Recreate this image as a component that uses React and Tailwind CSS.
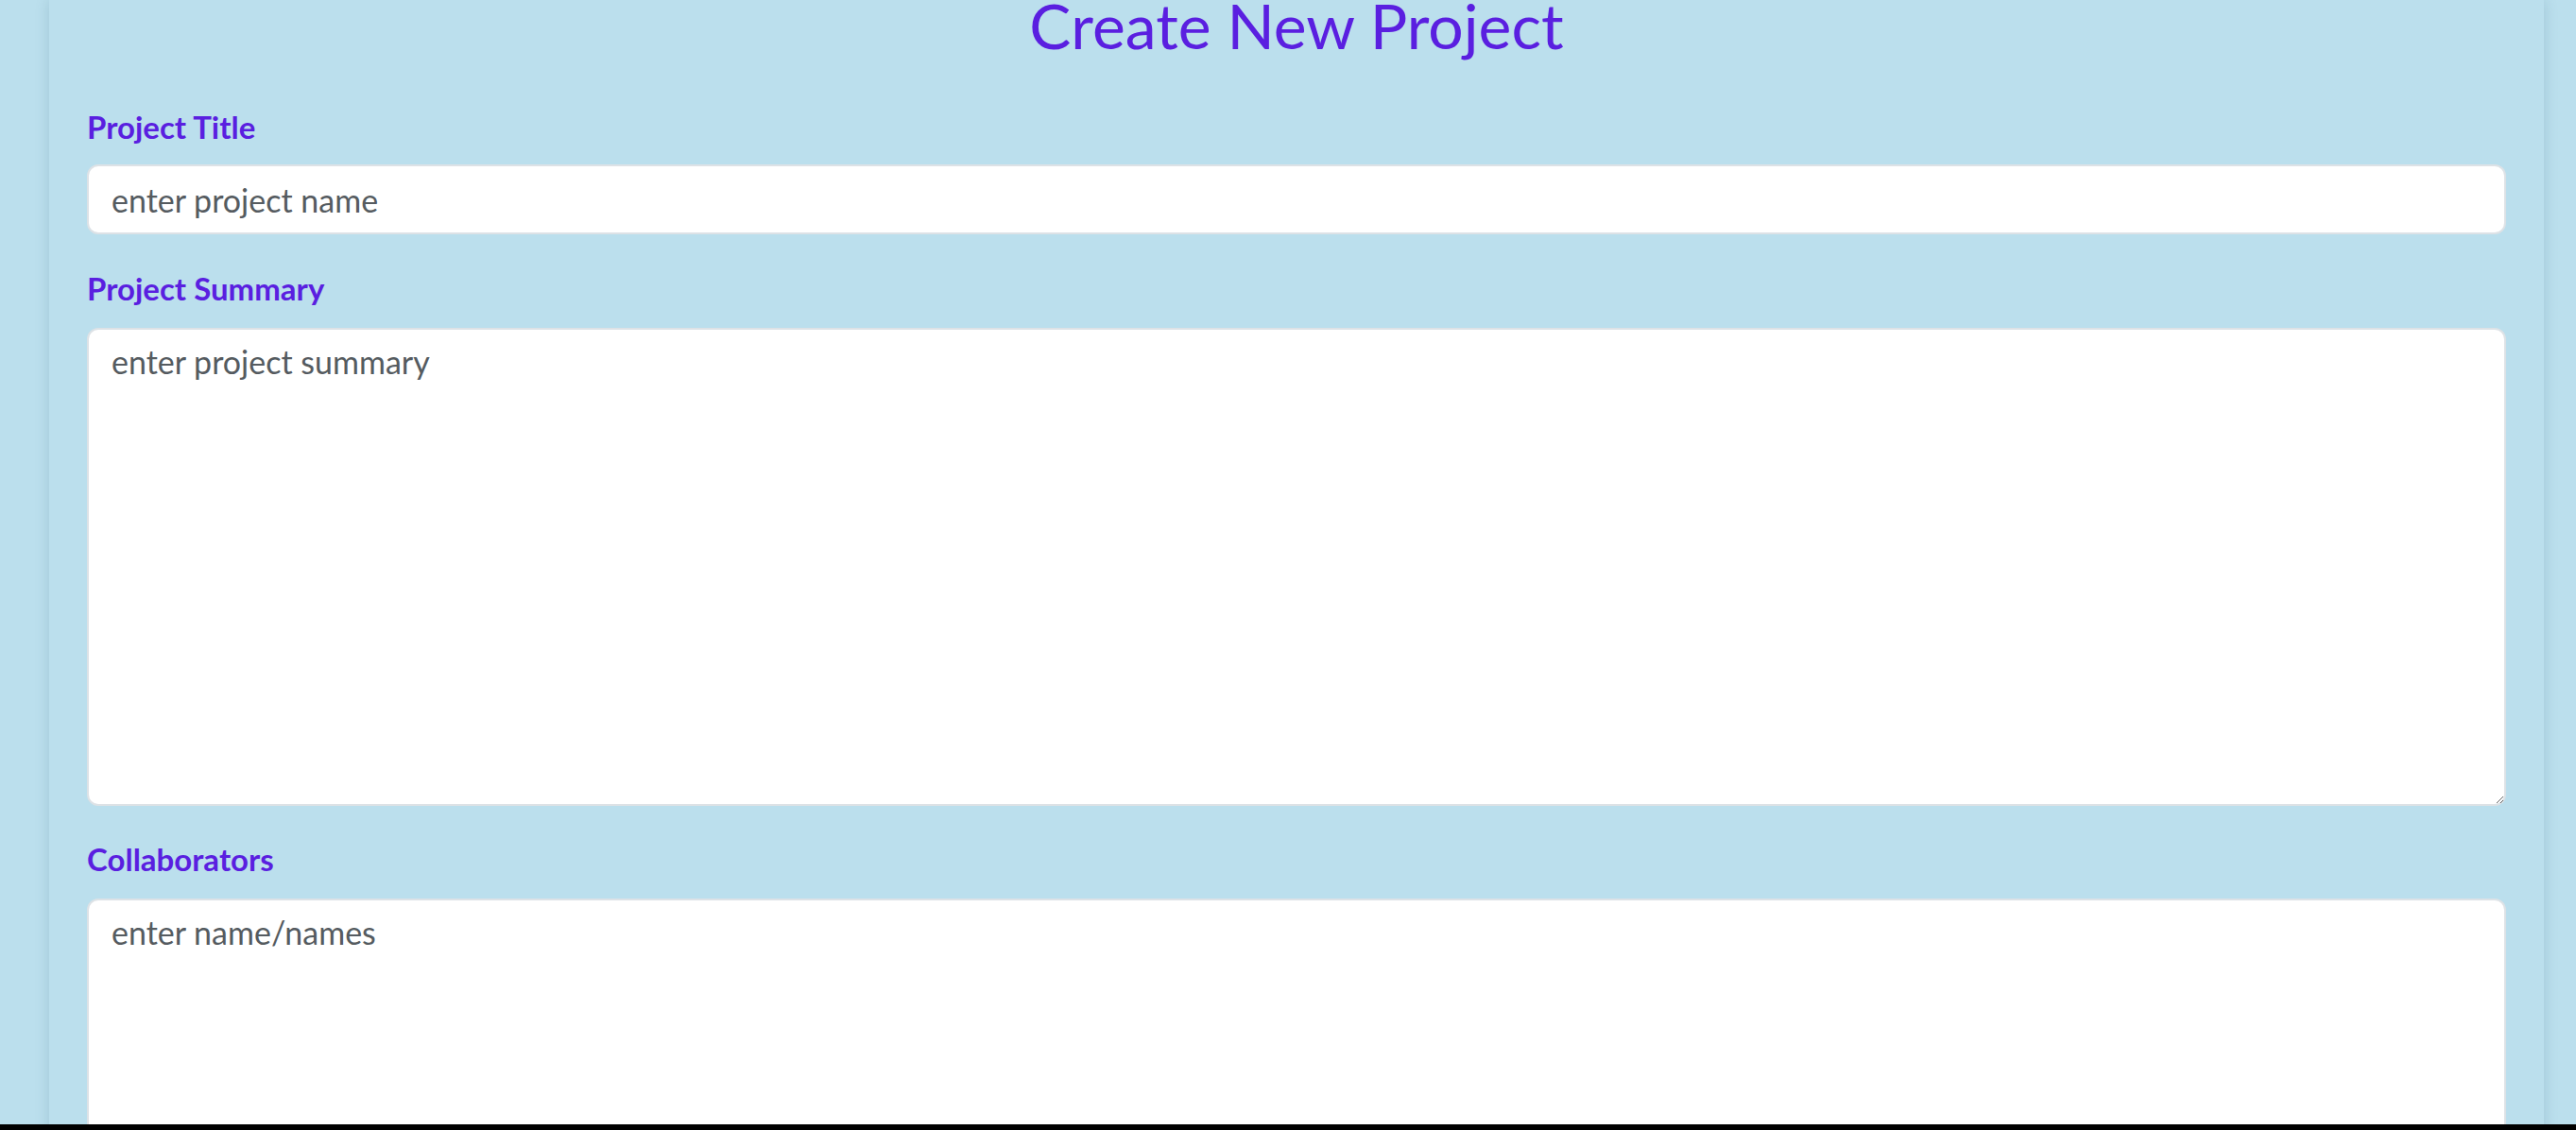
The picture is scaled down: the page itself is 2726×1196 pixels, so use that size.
export default function App() {
  const font = { fontFamily: 'Lato, "Open Sans", sans-serif' };

  return (
    <div className="flex h-[1196px] flex-col bg-black" style={font}>
      <div className="h-[1190px] overflow-hidden bg-[#bbdfed]">
        <div className="ml-[52px] mr-[34px] bg-[#bbdfed] px-[40px] pb-[40px] shadow-[0_0_14px_rgba(40,90,110,0.18)]">
          {/* Header */}
          <h1 className="text-center text-[66px] font-normal leading-[54px] text-[#5a1fe0]">
            Create New Project
          </h1>

          {/* Project Title */}
          <label className="mt-[60px] block text-[33px] font-bold leading-[40px] text-[#5a1fe0]">
            Project Title
          </label>
          <input
            type="text"
            placeholder="enter project name"
            className="mt-[20px] block h-[74px] w-full rounded-[12px] border-2 border-[#dde2e6] bg-white px-[24px] text-[34px] text-[#444] outline-none placeholder:text-[#555b60]"
          />

          {/* Project Summary */}
          <label className="mt-[37px] block text-[33px] font-bold leading-[40px] text-[#5a1fe0]">
            Project Summary
          </label>
          <textarea
            placeholder="enter project summary"
            className="mt-[22px] block h-[506px] w-full rounded-[12px] border-2 border-[#dde2e6] bg-white px-[24px] py-[12px] text-[34px] leading-[44px] text-[#444] outline-none placeholder:text-[#555b60]"
          />

          {/* Collaborators */}
          <label className="mt-[36px] block text-[33px] font-bold leading-[40px] text-[#5a1fe0]">
            Collaborators
          </label>
          <textarea
            placeholder="enter name/names"
            className="mt-[22px] block h-[400px] w-full rounded-[12px] border-2 border-[#dde2e6] bg-white px-[24px] py-[12px] text-[34px] leading-[44px] text-[#444] outline-none placeholder:text-[#555b60]"
          />
        </div>
      </div>
    </div>
  );
}
